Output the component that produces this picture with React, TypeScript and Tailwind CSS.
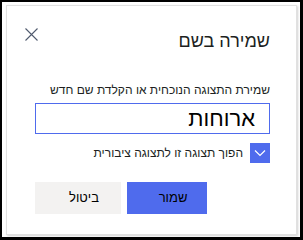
export default function App() {
  return (
    <div className="w-[303px] h-[240px] bg-white border-t-2 border-l-2 border-r-[3px] border-b-[3px] border-black pt-[3px] pl-[4px] pr-[3px] pb-[2px] font-['Liberation_Sans',Arial,sans-serif] text-[#201f1e]">
      <div
        dir="rtl"
        className="h-full bg-white border border-[#e1e1e1] shadow-[1px_1px_2px_rgba(0,0,0,0.18)] pt-[23px] pr-[26px] pl-[28px] flex flex-col"
      >
        {/* Header */}
        <div className="flex justify-between items-start h-[24px]">
          <h1 className="text-[18px] leading-[24px] font-normal">שמירה בשם</h1>
          <button className="ml-[-10px] mt-[-1px] w-[13px] h-[13px] flex items-center justify-center" aria-label="סגור">
            <svg width="13" height="13" viewBox="0 0 13 13" fill="none">
              <path d="M0.5 0.5 L12.5 12.5 M12.5 0.5 L0.5 12.5" stroke="#505a6e" strokeWidth="1.1" />
            </svg>
          </button>
        </div>

        {/* Name field */}
        <label className="mt-[29px] text-[12px] leading-[16px]">שמירת התצוגה הנוכחית או הקלדת שם חדש</label>
        <div className="mt-[5px] h-[31px] border border-[#4f6bed] flex items-center pr-[14px]">
          <span className="text-[22px] leading-[28px] text-black">ארוחות</span>
        </div>

        {/* Public checkbox */}
        <div className="mt-[9px] flex items-center gap-[7px]">
          <div className="w-[20px] h-[20px] bg-[#4f6bed] flex items-center justify-center">
            <svg width="12" height="8" viewBox="0 0 12 8" fill="none">
              <path d="M1 1.5 L6 6.5 L11 1.5" stroke="white" strokeWidth="1.2" />
            </svg>
          </div>
          <span className="text-[12px] leading-[16px]">הפוך תצוגה זו לתצוגה ציבורית</span>
        </div>

        {/* Actions */}
        <div className="mt-[19px] flex justify-end gap-[6px]">
          <button className="w-[80px] h-[32px] bg-[#4f6bed] text-black text-[13px] pl-[12px] flex items-center justify-center">
            שמור
          </button>
          <button className="w-[86px] h-[32px] bg-[#f3f2f1] text-black text-[13px] pl-[12px] flex items-center justify-center">
            ביטול
          </button>
        </div>
      </div>
    </div>
  );
}
